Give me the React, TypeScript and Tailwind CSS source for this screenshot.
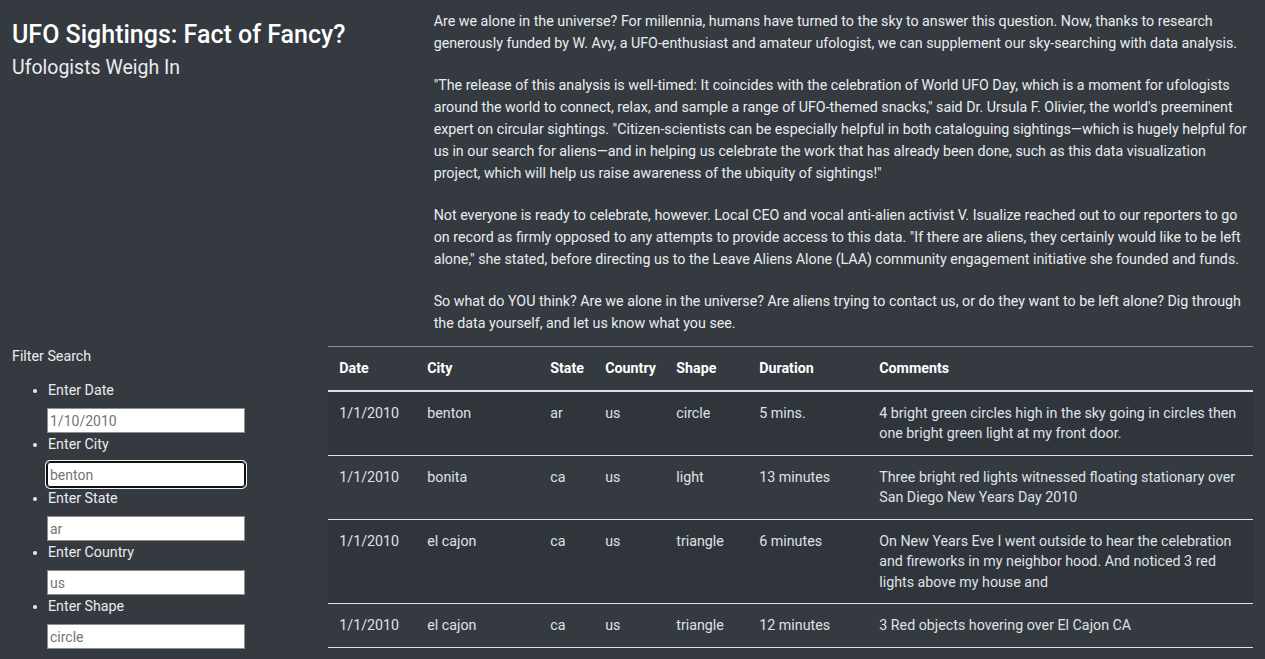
const rows = [
  {
    date: "1/1/2010",
    city: "benton",
    state: "ar",
    country: "us",
    shape: "circle",
    duration: "5 mins.",
    comments: "4 bright green circles high in the sky going in circles then one bright green light at my front door.",
  },
  {
    date: "1/1/2010",
    city: "bonita",
    state: "ca",
    country: "us",
    shape: "light",
    duration: "13 minutes",
    comments: "Three bright red lights witnessed floating stationary over San Diego New Years Day 2010",
  },
  {
    date: "1/1/2010",
    city: "el cajon",
    state: "ca",
    country: "us",
    shape: "triangle",
    duration: "6 minutes",
    comments:
      "On New Years Eve I went outside to hear the celebration and fireworks in my neighbor hood. And noticed 3 red lights above my house and",
  },
  {
    date: "1/1/2010",
    city: "el cajon",
    state: "ca",
    country: "us",
    shape: "triangle",
    duration: "12 minutes",
    comments: "3 Red objects hovering over El Cajon CA",
  },
];

const filters = [
  { label: "Enter Date", placeholder: "1/10/2010" },
  { label: "Enter City", placeholder: "benton", focused: true },
  { label: "Enter State", placeholder: "ar" },
  { label: "Enter Country", placeholder: "us" },
  { label: "Enter Shape", placeholder: "circle" },
];

const heads = ["Date", "City", "State", "Country", "Shape", "Duration", "Comments"];

export default function App() {
  return (
    <div className="min-h-screen bg-[#343a40] font-['Roboto','Liberation_Sans',sans-serif] text-[14.25px] text-[#e9ecef]">
      {/* intro */}
      <div className="grid grid-cols-12">
        <div className="col-span-4 px-3 pt-[20px]">
          <h1 className="text-[25px] font-medium leading-[30px] text-white">UFO Sightings: Fact of Fancy?</h1>
          <h2 className="mt-[5px] text-[19.5px] font-normal leading-[26px] text-[#e9ecef]">Ufologists Weigh In</h2>
        </div>
        <div className="col-span-8 px-3 pt-[10px] leading-[22px]">
          <p className="mb-5">
            Are we alone in the universe? For millennia, humans have turned to the sky to answer this question. Now, thanks
            to research generously funded by W. Avy, a UFO-enthusiast and amateur ufologist, we can supplement our
            sky-searching with data analysis.
          </p>
          <p className="mb-5">
            "The release of this analysis is well-timed: It coincides with the celebration of World UFO Day, which is a
            moment for ufologists around the world to connect, relax, and sample a range of UFO-themed snacks," said Dr.
            Ursula F. Olivier, the world's preeminent expert on circular sightings. "Citizen-scientists can be especially
            helpful in both cataloguing sightings—which is hugely helpful for us in our search for aliens—and in helping us
            celebrate the work that has already been done, such as this data visualization project, which will help us
            raise awareness of the ubiquity of sightings!"
          </p>
          <p className="mb-5">
            Not everyone is ready to celebrate, however. Local CEO and vocal anti-alien activist V. Isualize reached out to
            our reporters to go on record as firmly opposed to any attempts to provide access to this data. "If there are
            aliens, they certainly would like to be left alone," she stated, before directing us to the Leave Aliens Alone
            (LAA) community engagement initiative she founded and funds.
          </p>
          <p>
            So what do YOU think? Are we alone in the universe? Are aliens trying to contact us, or do they want to be left
            alone? Dig through the data yourself, and let us know what you see.
          </p>
        </div>
      </div>

      {/* filters + table */}
      <div className="mt-[12px] grid grid-cols-12">
        <div className="col-span-3 px-3">
          <div className="leading-[20px] text-[#e9ecef]">Filter Search</div>
          <ul className="mt-[14px] list-disc pl-9 text-[#e9ecef] marker:text-[#e9ecef]">
            {filters.map((f) => (
              <li key={f.label} className="mb-[1px] leading-[20px]">
                {f.label}
                <input
                  type="text"
                  placeholder={f.placeholder}
                  className={
                    "mt-[8px] mb-[1px] block h-[25px] w-[198px] -ml-[1px] bg-white px-[2px] text-[14px] text-[#333] placeholder:text-[#757575] " +
                    (f.focused
                      ? "rounded-[3px] border border-[#101010] outline-1 outline-[#101010] shadow-[0_0_0_2px_#f1f1f1]"
                      : "border border-[#8f8f8f]")
                  }
                />
              </li>
            ))}
          </ul>
        </div>
        <div className="col-span-9 px-3">
          <table className="w-full table-fixed border-collapse border-t border-[#8d9196] text-left">
            <colgroup>
              <col className="w-[88px]" />
              <col className="w-[123px]" />
              <col className="w-[55px]" />
              <col className="w-[71px]" />
              <col className="w-[83px]" />
              <col className="w-[120px]" />
              <col />
            </colgroup>
            <thead>
              <tr className="border-b-2 border-[#dee2e6]">
                {heads.map((h) => (
                  <th key={h} className="px-[11px] py-[11px] align-top font-bold leading-[20.5px] text-white">
                    {h}
                  </th>
                ))}
              </tr>
            </thead>
            <tbody>
              {rows.map((r, i) => (
                <tr key={i} className={"border-b border-[#dee2e6] " + (i % 2 === 0 ? "bg-[#30353b]" : "")}>
                  {[r.date, r.city, r.state, r.country, r.shape, r.duration, r.comments].map((c, j) => (
                    <td key={j} className="px-[11px] py-[11px] align-top leading-[20.5px] text-[#dee2e6]">
                      {c}
                    </td>
                  ))}
                </tr>
              ))}
            </tbody>
          </table>
        </div>
      </div>
      <div className="mt-[12px] h-10 bg-[#2b3035]" />
    </div>
  );
}
